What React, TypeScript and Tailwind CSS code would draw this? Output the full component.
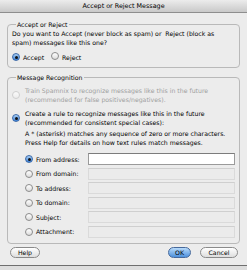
import React from "react";

const font = { fontFamily: '"DejaVu Sans", "Liberation Sans", sans-serif' };

function Radio({ checked = false, disabled = false }: { checked?: boolean; disabled?: boolean }) {
  if (checked) {
    return (
      <span className="relative inline-flex h-[8px] w-[8px] shrink-0 items-center justify-center rounded-full border border-[#3d6aa8] bg-gradient-to-b from-[#a9cff4] to-[#3b82d9]">
        <span className="h-[3px] w-[3px] rounded-full bg-[#111]" />
      </span>
    );
  }
  return (
    <span
      className={
        "inline-block h-[8px] w-[8px] shrink-0 rounded-full border bg-gradient-to-b " +
        (disabled ? "border-[#cfcfcf] from-[#fbfbfb] to-[#ececec]" : "border-[#8c8c8c] from-[#ffffff] to-[#dcdcdc]")
      }
    />
  );
}

function Field({ label, active = false }: { label: string; active?: boolean }) {
  return (
    <div className="flex h-[12px] items-center">
      <div className="flex w-[63px] shrink-0 items-center gap-[3px]">
        <Radio checked={active} />
        <span>{label}</span>
      </div>
      <div
        className={
          "h-[12px] flex-1 border " +
          (active ? "border-[#9a9a9a] border-t-[#7c7c7c] bg-white" : "border-[#dadada] border-t-[#cfcfcf] bg-[#ebebeb]")
        }
      />
    </div>
  );
}

export default function App() {
  return (
    <div className="h-[270px] w-[247px] overflow-hidden bg-[#dedede] text-[6.2px] leading-[9px] text-black" style={font}>
      <div className="flex h-[266px] flex-col border-b border-[#6f6f6f] bg-[#ececec]">
        <div className="flex h-[13px] shrink-0 items-center justify-center border-b border-[#8e8e8e] bg-gradient-to-b from-[#ececec] to-[#c9c9c9] text-[6.4px]">
          Accept or Reject Message
        </div>

        <fieldset className="ml-[7px] mt-[7px] w-[233px] rounded-[4px] border border-[#b9b9b9] pb-[5px] pl-[4px] pr-[4px]">
          <legend className="ml-[4px] px-[1px]">Accept or Reject</legend>
          <div>Do you want to Accept (never block as spam) or&nbsp; Reject (block as</div>
          <div>spam) messages like this one?</div>
          <div className="mt-[5px] flex items-center">
            <Radio checked />
            <span className="ml-[3px]">Accept</span>
            <span className="ml-[7px]"><Radio /></span>
            <span className="ml-[3px]">Reject</span>
          </div>
        </fieldset>

        <fieldset className="ml-[7px] mt-[5px] w-[233px] rounded-[4px] border border-[#b9b9b9] pb-[5px] pl-[4px] pr-[4px]">
          <legend className="ml-[4px] px-[1px]">Message Recognition</legend>
          <div className="mt-[4px] flex items-center gap-[5px] text-[#a0a0a0]">
            <Radio disabled />
            <div>
              <div>Train Spamnix to recognize messages like this in the future</div>
              <div>(recommended for false positives/negatives).</div>
            </div>
          </div>
          <div className="mt-[5px] flex items-center gap-[5px]">
            <Radio checked />
            <div>
              <div>Create a rule to recognize messages like this in the future</div>
              <div>(recommended for consistent special cases):</div>
            </div>
          </div>
          <div className="ml-[13px] mt-[2px]">
            <div>A * (asterisk) matches any sequence of zero or more characters.</div>
            <div>Press Help for details on how text rules match messages.</div>
          </div>
          <div className="ml-[13px] mt-[6px] flex flex-col gap-[2.6px]">
            <Field label="From address:" active />
            <Field label="From domain:" />
            <Field label="To address:" />
            <Field label="To domain:" />
            <Field label="Subject:" />
            <Field label="Attachment:" />
          </div>
        </fieldset>

        <div className="mt-[3px] flex items-center px-[10px]">
          <button className="h-[11px] w-[30px] rounded-full border border-[#8a8a8a] bg-gradient-to-b from-white to-[#dedede] leading-[9px]">
            Help
          </button>
          <div className="flex-1" />
          <button className="h-[11px] w-[23px] rounded-full border border-[#46699c] bg-gradient-to-b from-[#b7dafa] to-[#4c90dc] leading-[9px]">
            OK
          </button>
          <button className="ml-[9px] mr-[-1px] h-[11px] w-[38px] rounded-full border border-[#8a8a8a] bg-gradient-to-b from-white to-[#dedede] leading-[9px]">
            Cancel
          </button>
        </div>
      </div>
    </div>
  );
}
